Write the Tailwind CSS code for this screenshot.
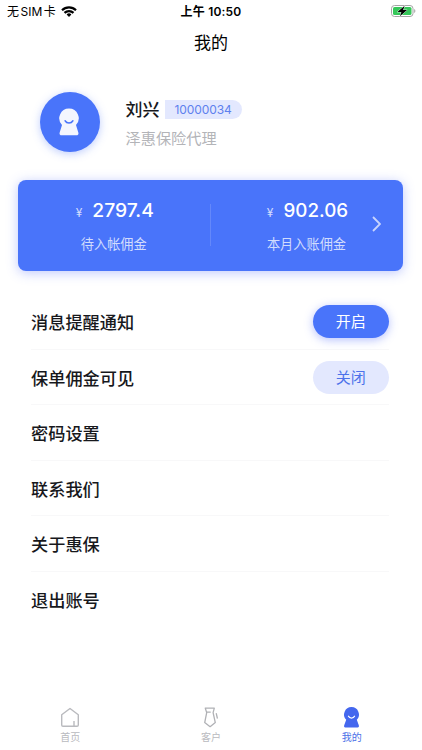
<!DOCTYPE html>
<html lang="zh-CN">
<head>
    <meta charset="UTF-8">
    <meta name="viewport" content="width=device-width, initial-scale=1.0">
    <title>我的</title>
    <script src="https://cdn.jsdelivr.net/npm/@tailwindcss/browser@4"></script>
</head>
<body class="bg-white font-['Inter','Noto_Sans_CJK_SC',sans-serif] text-[#17181c]">
    <div class="w-[422px] h-[750px] flex flex-col overflow-hidden">
        <!-- Status bar -->
        <header class="h-[22px] grid grid-cols-3 items-center pl-[7px] pr-[6px] text-black leading-none">
            <div class="flex items-center gap-[5px] text-[12px]">
                <span class="whitespace-nowrap pt-px">无<span class="mx-[1.5px]">SIM</span>卡</span>
                <svg class="w-4 h-[11px]" viewBox="0 0 16 11" fill="none" stroke="#000" stroke-width="2.2">
                    <path d="M1 4.2a10 10 0 0 1 14 0" />
                    <path d="M3.5 6.9a6.4 6.4 0 0 1 9 0" />
                    <path d="M8 11L5.6 8.5a3.4 3.4 0 0 1 4.800 0z" fill="#000" stroke="none" />
                </svg>
            </div>
            <div class="text-center text-[12px] font-semibold tracking-[0.2px] whitespace-nowrap pt-px pr-px">上午 10:50</div>
            <svg class="w-[25px] h-3 justify-self-end" viewBox="0 0 25 12">
                <rect x="0.5" y="0.5" width="21.5" height="11" rx="3" fill="#fff" stroke="#a5a5a5" />
                <rect x="2" y="2" width="18.5" height="8" rx="1.6" fill="#35c759" />
                <path d="M23.2 4v4c1.6-.6 1.6-3.4 0-4z" fill="#a5a5a5" />
                <path d="M13.6 .8L6.4 6.900h4L8.900 11.200l7.200-6.100h-4z" fill="#000" stroke="#fff" stroke-width="0.8" paint-order="stroke" />
            </svg>
        </header>

        <h1 class="h-[42px] text-center text-[17px] leading-[42px] text-black">我的</h1>

        <!-- Profile -->
        <section class="h-[115.5px] flex items-center pl-[39.5px] gap-[26px]">
            <div class="size-[60px] mt-px rounded-full bg-[#4974fa] shadow-[0_2px_8px_rgba(73,116,250,0.35)] flex items-center justify-center">
                <svg class="w-5 h-7 mr-px" viewBox="0 0 20 28">
                    <path d="M10 .5a9.700 9.700 0 0 1 7 16.400l2.300 7.600c.5 1.800-.2 2.800-1.700 2.800H2.400c-1.500 0-2.200-1-1.700-2.800L3 16.900A9.700 9.700 0 0 1 10 .5z" fill="#f4f6fe" />
                    <path d="M6.200 12.800c1.500 2.900 6.100 2.900 7.600 0" fill="none" stroke="#4974fa" stroke-width="1.600" stroke-linecap="round" />
                </svg>
            </div>
            <div>
                <div class="flex items-center gap-[5px]">
                    <span class="text-[17px] leading-[26px] font-medium pt-[5px]">刘兴</span>
                    <span class="w-[77px] h-[19px] mt-[3px] rounded-r-full bg-[#e3e8fe] text-[#5e80ee] text-[12px] tracking-[-0.1px] leading-[19px] pl-[10px]">10000034</span>
                </div>
                <p class="mt-[4px] text-[15.2px] leading-[24px] text-[#b3b4b8]">泽惠保险代理</p>
            </div>
        </section>

        <!-- Commission card -->
        <section class="relative shrink-0 h-[91.5px] ml-[17.5px] mr-[19.5px] rounded-[8px] bg-[#4974fa] shadow-[0_2px_12px_rgba(73,100,250,0.35)] flex items-center text-white">
            <div class="w-[192.5px] pt-[2px] flex flex-col items-center">
                <div class="flex items-baseline gap-[10px] pl-[2px] leading-6">
                    <span class="text-[12px] text-white/75">¥</span>
                    <span class="text-[19.3px] font-medium">2797.4</span>
                </div>
                <p class="mt-[9px] text-[13.2px] leading-5 text-white/75">待入帐佣金</p>
            </div>
            <div class="w-px h-[42px] bg-white/15"></div>
            <div class="w-[191px] pt-[2px] flex flex-col items-center">
                <div class="flex items-baseline gap-[10px] pl-[2px] leading-6">
                    <span class="text-[12px] text-white/75">¥</span>
                    <span class="text-[18.800px] font-medium">902.06</span>
                </div>
                <p class="mt-[9px] text-[13.2px] leading-5 text-white/75">本月入账佣金</p>
            </div>
            <svg class="absolute right-[22px] top-[36px] w-[9px] h-4" viewBox="0 0 9 16" fill="none" stroke="#c8d4fd" stroke-width="1.8">
                <path d="M1 1l7 7-7 7" />
            </svg>
        </section>

        <!-- Settings -->
        <ul class="mt-[23px] ml-[31px] mr-[33px] text-[17.2px] font-medium">
            <li class="h-[55.5px] flex items-center justify-between border-b border-[#f8f8f9]">
                <span class="pt-[4px]">消息提醒通知</span>
                <button class="w-[76.5px] h-[33px] mt-px pt-px rounded-full bg-[#4974fa] text-white text-[15px] font-normal shadow-[0_2px_10px_rgba(73,100,250,0.4)]">开启</button>
            </li>
            <li class="h-[55.5px] flex items-center justify-between border-b border-[#f8f8f9]">
                <span class="pt-[4px]">保单佣金可见</span>
                <button class="w-[76.5px] h-[33px] mt-px pt-[2px] rounded-full bg-[#e3e8fe] text-[#4c72ea] text-[15px] font-normal">关闭</button>
            </li>
            <li class="h-[55.5px] pt-[4px] flex items-center border-b border-[#f8f8f9]">密码设置</li>
            <li class="h-[55.5px] pt-[4px] flex items-center border-b border-[#f8f8f9]">联系我们</li>
            <li class="h-[55.5px] pt-[4px] flex items-center border-b border-[#f8f8f9]">关于惠保</li>
            <li class="h-[55.5px] pt-[4px] flex items-center">退出账号</li>
        </ul>

        <!-- Tab bar -->
        <nav class="mt-auto h-[44px] grid grid-cols-3 text-[10px] leading-[14px] text-[#b9babe]">
            <a class="flex flex-col items-center gap-[2px]">
                <svg class="w-5 h-[22px]" viewBox="0 0 20 22" fill="none" stroke="#b9babe" stroke-width="1.4" stroke-linejoin="round">
                    <path d="M1.7 8.700L10 2.500l8.300 6.200v10.300c0 .9-.4 1.300-1.300 1.300H3c-.9 0-1.300-.4-1.300-1.300z" />
                    <path d="M14 20v-5" />
                </svg>
                首页
            </a>
            <a class="flex flex-col items-center gap-[2px]">
                <svg class="w-5 h-[22px]" viewBox="0 0 20 22" fill="none" stroke="#b0b1b5" stroke-width="1.3" stroke-linejoin="round" stroke-linecap="round">
                    <path d="M4.300 2.200h9l-1.200 4.400 2.200 10-5.200 4.100-5.400-4.100 2-10z" />
                    <path d="M5.700 6.100h3.600M15.300 7.700l1 4.300" />
                </svg>
                客户
            </a>
            <a class="flex flex-col items-center gap-[2px] text-[#4a70e8]">
                <svg class="w-5 h-[22px]" viewBox="0 0 20 22">
                    <path d="M9.500 1.100a7.400 7.400 0 0 1 5.300 12.600l2 5.600c.4 1.300 0 2.100-1.100 2.100H3.300c-1.100 0-1.500-.8-1.100-2.100l2-5.600A7.400 7.400 0 0 1 9.500 1.100z" fill="#4467ee" />
                    <path d="M6.500 10.300c1.200 2.300 4.800 2.300 6 0" fill="none" stroke="#fff" stroke-width="1.3" stroke-linecap="round" />
                </svg>
                我的
            </a>
        </nav>
    </div>
</body>
</html>
